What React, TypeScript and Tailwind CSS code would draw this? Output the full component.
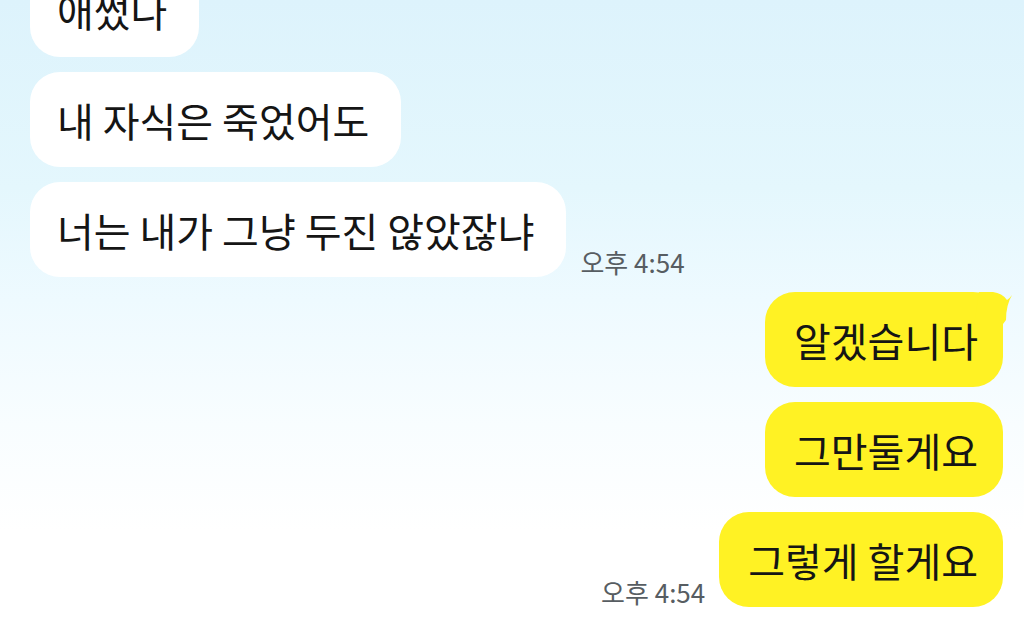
import React from "react";

const font = { fontFamily: '"Noto Sans CJK KR", "Noto Sans", sans-serif' };

function Left({ text, time }: { text: string; time?: string }) {
  return (
    <div className="flex items-end gap-[14px]">
      <div className="h-[95px] flex items-center rounded-[30px] bg-white pl-[27px] pr-[32px] text-[40px] leading-none text-[#151515] whitespace-nowrap">
        {text}
      </div>
      {time && (
        <div className="pb-[2px] text-[26px] leading-none text-[#575d62] whitespace-nowrap">{time}</div>
      )}
    </div>
  );
}

function Right({ text, time, tail }: { text: string; time?: string; tail?: boolean }) {
  return (
    <div className="flex items-end justify-end gap-[14px]">
      {time && (
        <div className="pb-[2px] text-[26px] leading-none text-[#575d62] whitespace-nowrap">{time}</div>
      )}
      <div className="relative h-[95px] flex items-center rounded-[30px] bg-[#fff224] pl-[29px] pr-[25px] text-[40px] leading-none text-[#151515] whitespace-nowrap">
        {tail && (
          <svg
            className="absolute right-[-10px] top-0"
            width="40"
            height="40"
            viewBox="0 0 40 40"
          >
            <path d="M6 0 L20 0 Q29 1 34 8 Q37 6 39 3 Q33 13 33 28 L24 40 L0 40 Z" fill="#fff224" />
          </svg>
        )}
        <span className="relative">{text}</span>
      </div>
    </div>
  );
}

export default function App() {
  return (
    <div
      className="w-[1024px] h-[625px] overflow-hidden bg-[linear-gradient(to_bottom,#ddf3fc_0%,#e4f7fd_30%,#eefaff_48%,#f8fdff_68%,#ffffff_85%)]"
      style={font}
    >
      <div className="mt-[-38px] flex flex-col gap-[15px] pl-[30px] pr-[21px]">
        <Left text="애썼나" />
        <Left text="내 자식은 죽었어도" />
        <Left text="너는 내가 그냥 두진 않았잖냐" time="오후 4:54" />
        <Right text="알겠습니다" tail />
        <Right text="그만둘게요" />
        <Right text="그렇게 할게요" time="오후 4:54" />
      </div>
    </div>
  );
}
